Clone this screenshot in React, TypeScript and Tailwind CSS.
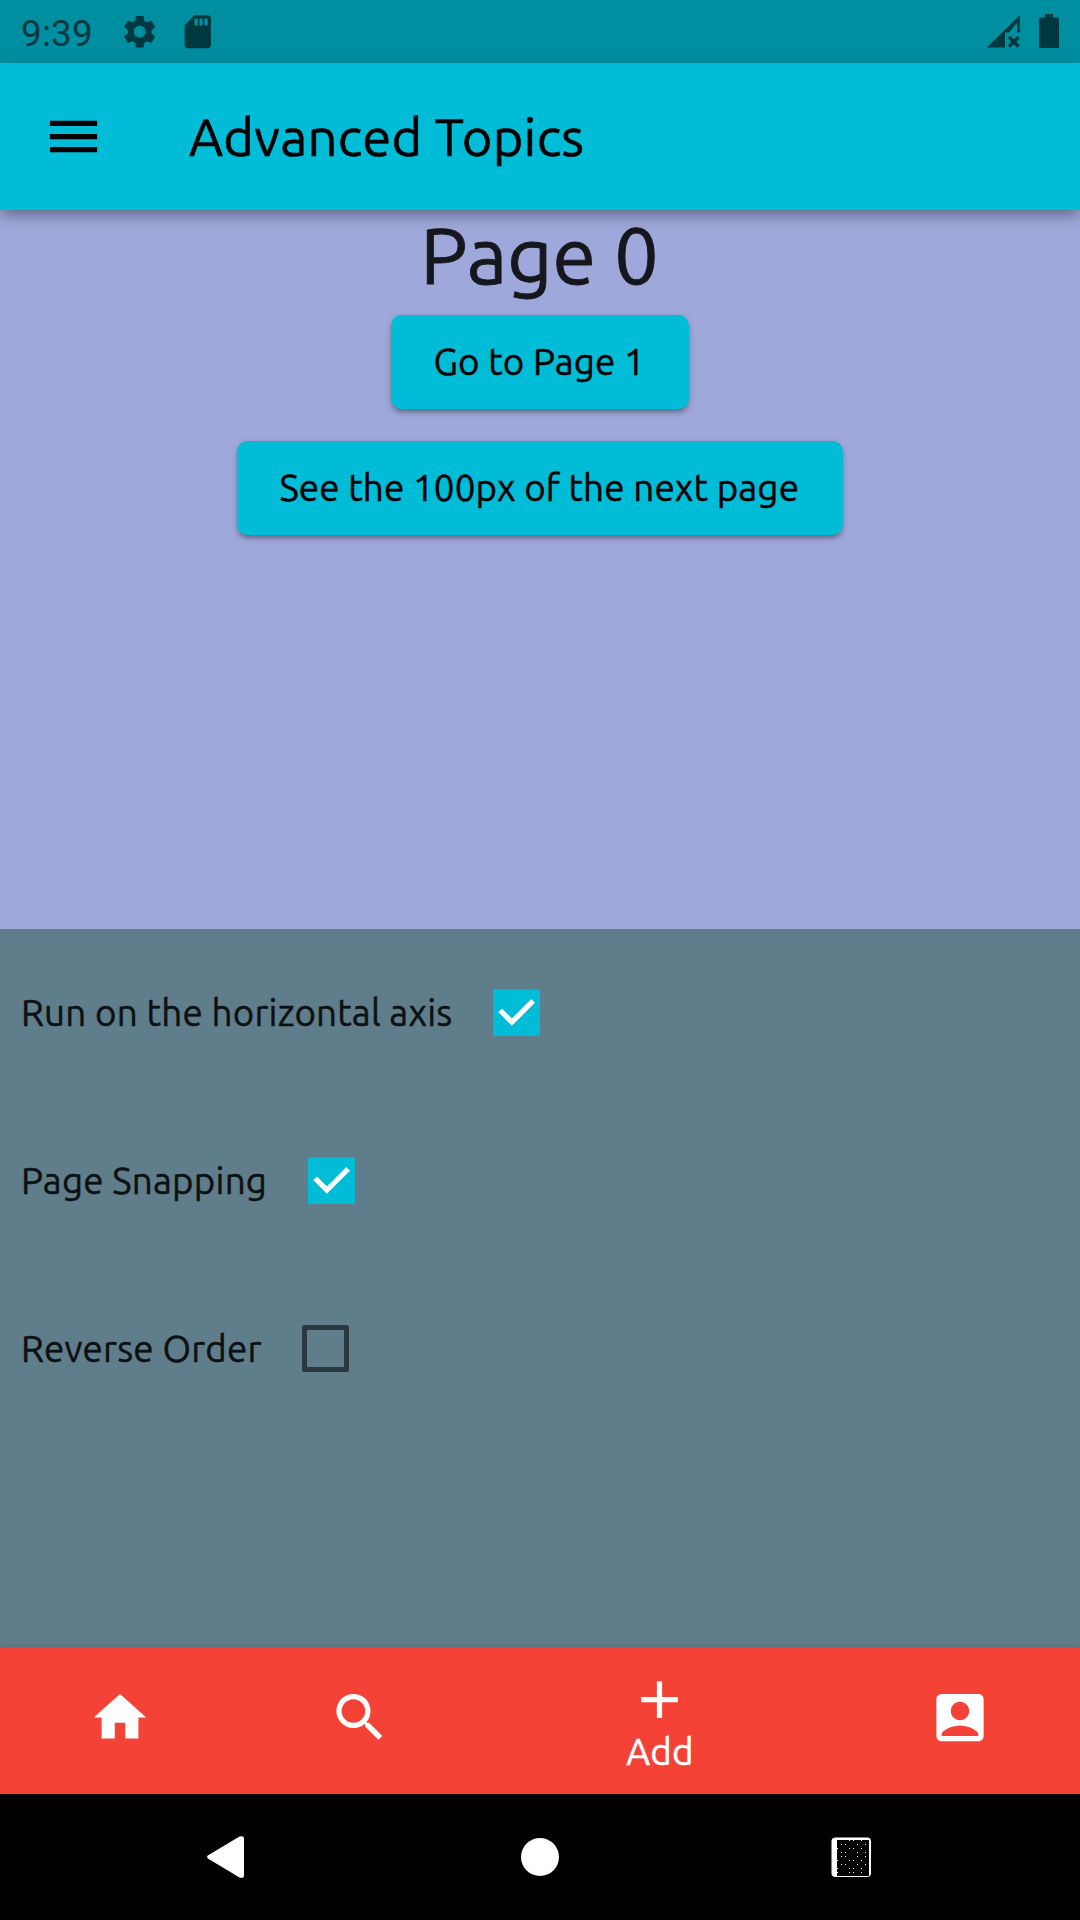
import type { ReactNode } from "react";
import { MdAccountBox, MdAdd, MdHome, MdMenu, MdSearch, MdSdCard, MdSettings } from "react-icons/md";

function StatusBar() {
  return (
    <header className="flex h-[63px] items-start bg-[#008ea1] pt-[12px] pr-[21px] pl-[21px] text-[#003840]">
      <span className="mt-px w-[99px] font-['Roboto'] text-[36.75px] leading-[42px] tracking-[0.25px]">9:39</span>
      <MdSettings className="size-[39.5px]" />
      <MdSdCard className="ml-[18.5px] size-[39.5px]" />
      <svg className="mt-[3px] ml-auto h-[33px] w-[33px]" viewBox="0 0 33 33" fill="currentColor">
        <path d="M33 0V17.5H30.2V7.5L22 17.5H18V32.5H0Z" />
        <path d="M22 22L31.5 31.5M31.5 22L22 31.5" stroke="currentColor" strokeWidth="3.6" />
      </svg>
      <svg className="mt-[2px] ml-[19px] h-[34px] w-[20px]" viewBox="0 0 20 34" fill="currentColor">
        <path d="M6 0H14V3.5H18.5A1.5 1.5 0 0 1 20 5V32.5A1.5 1.5 0 0 1 18.5 34H1.5A1.5 1.5 0 0 1 0 32.5V5A1.5 1.5 0 0 1 1.5 3.5H6Z" />
      </svg>
    </header>
  );
}

function AppBar() {
  return (
    <div className="relative z-10 flex h-[147px] items-center bg-[#00bcd7] pl-[42px] text-black shadow-[0_5px_10px_-3px_rgba(0,0,0,0.2),0_9px_13px_-1px_rgba(0,0,0,0.15),0_3px_20px_0_rgba(0,0,0,0.1)]">
      <MdMenu className="size-[63px]" />
      <h1 className="ml-[84px] text-[52.5px] leading-[60px] [-webkit-text-stroke:0.6px]">Advanced Topics</h1>
    </div>
  );
}

function RaisedButton({ children }: { children: ReactNode }) {
  return (
    <div className="flex h-[126px] items-center">
      <button className="h-[94.5px] rounded-[10.5px] bg-[#00bcd7] pr-[44px] pl-[42.5px] text-[36.75px] leading-[42px] tracking-[0.15px] text-black shadow-[0_5px_4px_-2px_rgba(0,0,0,0.2),0_4px_6px_0_rgba(0,0,0,0.14),0_1px_7px_0_rgba(0,0,0,0.1)]">
        {children}
      </button>
    </div>
  );
}

function CheckRow({ label, checked }: { label: string; checked: boolean }) {
  return (
    <label className="flex h-[126px] items-center text-[36.75px] leading-[42px] tracking-[0.2px]">
      <span className="pr-px">{label}</span>
      <span className="flex size-[126px] items-center justify-center">
        {checked ? (
          <span className="flex size-[47.25px] items-center justify-center rounded-[2.6px] bg-[#00bcd7]">
            <svg className="size-[47.25px]" viewBox="0 0 18 18" fill="none" stroke="white" strokeWidth="2">
              <path d="M2.7 8.1L7.2 12.6L15.3 4.5" />
            </svg>
          </span>
        ) : (
          <span className="size-[47.25px] rounded-[2.6px] border-[5.25px] border-[#2b3840]" />
        )}
      </span>
    </label>
  );
}

// Speckle pattern inside the overview button, one string per lattice row.
const SPECKLES = [
  "...XX.X.",
  ".XX..X.X",
  "X..XX.X.",
  ".XX..X.X",
  ".XX..X.X",
  "X..XX.X.",
  ".XX..X.X",
  "X..XX.X.",
  "X..XX.X.",
];

function SystemNav() {
  return (
    <nav className="flex h-[126px] items-center bg-black text-white">
      <svg className="ml-[207px] h-[42px] w-[37px]" viewBox="0 0 37 42" fill="currentColor">
        <path d="M1.2 19.2L32.5 0.6Q37 -1 37 3V39Q37 43 32.5 41.4L1.2 22.8Q-1 21 1.2 19.2Z" />
      </svg>
      <span className="ml-[277px] size-[38px] rounded-full bg-current" />
      <svg className="ml-[272px] size-[40px]" viewBox="0 0 40 40" shapeRendering="crispEdges">
        <rect x="0.5" y="0.5" width="39.5" height="39.5" rx="4" fill="white" shapeRendering="auto" />
        <rect x="6" y="3" width="32" height="36" fill="black" />
        {SPECKLES.flatMap((row, r) =>
          [...row].map((c, i) =>
            c === "X" ? <rect key={`${r}-${i}`} x={6 + i * 4} y={3 + r * 4} width="1" height="1" fill="white" /> : null,
          ),
        )}
      </svg>
    </nav>
  );
}

export default function App() {
  return (
    <div className="flex h-[1920px] w-[1080px] flex-col overflow-hidden font-['Ubuntu','Noto_Sans',sans-serif] tracking-[0.27px]">
      <StatusBar />
      <AppBar />
      <main className="flex flex-1 flex-col [-webkit-text-stroke:0.45px]">
        <section className="flex h-[718.5px] flex-col items-center bg-[#9fa8da]">
          <h2 className="h-[89px] pt-px pr-px text-[78.75px] leading-[89px] tracking-[0.1px] text-[#16171d] [-webkit-text-stroke:0.9px]">
            Page 0
          </h2>
          <RaisedButton>Go to Page 1</RaisedButton>
          <RaisedButton>See the 100px of the next page</RaisedButton>
        </section>
        <section className="flex flex-1 flex-col gap-[42px] bg-[#607d8b] p-[21px] text-[#0d1112]">
          <CheckRow label="Run on the horizontal axis" checked />
          <CheckRow label="Page Snapping" checked />
          <CheckRow label="Reverse Order" checked={false} />
        </section>
      </main>
      <nav className="grid h-[147px] grid-cols-[240px_240px_360px_240px] justify-items-center bg-[#f44336] text-white shadow-[0_-1px_6px_rgba(0,0,0,0.1)]">
        <MdHome className="mt-[39px] size-[63px] translate-x-[-0.5px]" />
        <MdSearch className="mt-[39px] size-[63px] translate-x-[-0.5px]" />
        <div className="flex flex-col items-center pt-[21px]">
          <MdAdd className="size-[63px]" />
          <span className="text-[36.75px] leading-[41px] [-webkit-text-stroke:0.45px]">Add</span>
        </div>
        <MdAccountBox className="mt-[39px] size-[63px] translate-x-[-0.5px]" />
      </nav>
      <SystemNav />
    </div>
  );
}
